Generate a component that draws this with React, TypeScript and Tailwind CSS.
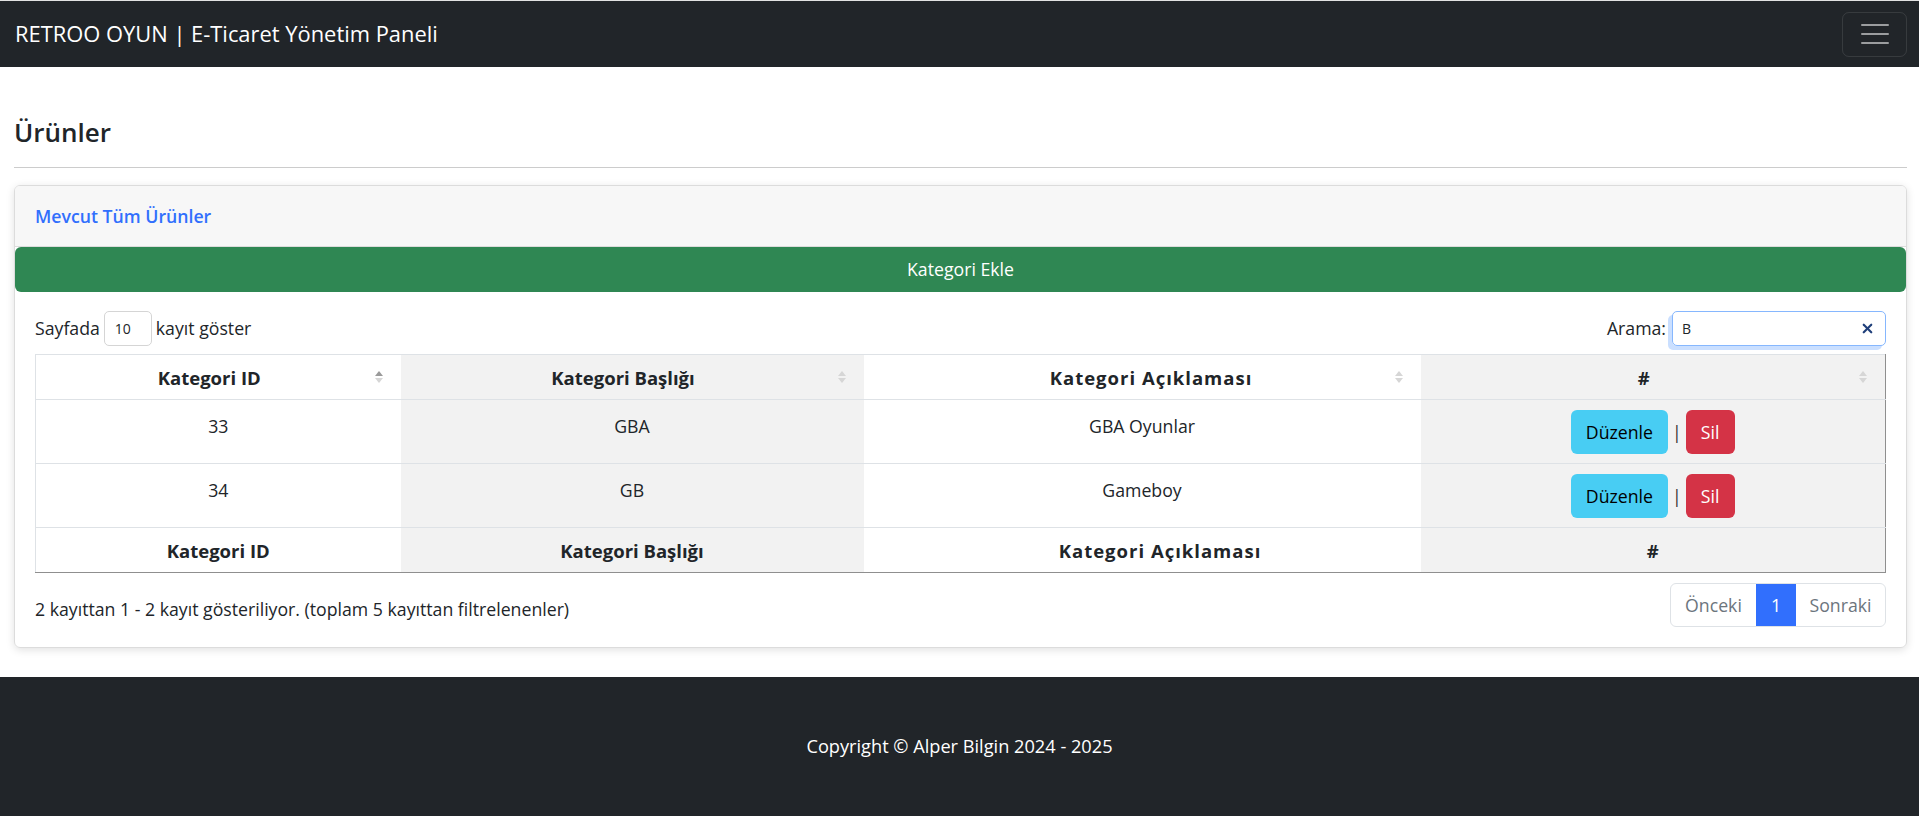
import { X } from "lucide-react";

const rows = [
  { id: 33, title: "GBA", desc: "GBA Oyunlar" },
  { id: 34, title: "GB", desc: "Gameboy" },
];

function SortIcon({ active }: { active?: boolean }) {
  return (
    <span className="absolute right-[18px] top-1/2 -translate-y-1/2 flex flex-col items-center gap-[2px]">
      <svg width="8" height="5" viewBox="0 0 8 5">
        <path d="M4 0L8 5H0Z" fill={active ? "#9a9a9a" : "#d6d6d6"} />
      </svg>
      <svg width="8" height="5" viewBox="0 0 8 5">
        <path d="M0 0H8L4 5Z" fill="#d6d6d6" />
      </svg>
    </span>
  );
}

export default function App() {
  return (
    <div className="min-h-screen bg-white text-[#212529] font-['Open_Sans',sans-serif] text-[17.7px] border-t border-[#e2e2e2]">
      {/* Navbar */}
      <nav className="h-[66px] bg-[#212529] flex items-center justify-between pl-[15px] pr-[12px]">
        <span className="text-white text-[21.9px]">RETROO OYUN | E-Ticaret Yönetim Paneli</span>
        <button className="w-[65px] h-[45px] border border-white/10 rounded-[7px] flex flex-col items-center justify-center gap-[7px]">
          <span className="block w-[28px] h-[2px] bg-white/55 rounded" />
          <span className="block w-[28px] h-[2px] bg-white/55 rounded" />
          <span className="block w-[28px] h-[2px] bg-white/55 rounded" />
        </button>
      </nav>

      {/* Main */}
      <main className="pl-[14px] pr-[12px]">
        <h4 className="text-[26px] font-semibold leading-[32px] pt-[49px] pb-[19px] border-b border-[#cccccc]">Ürünler</h4>

        <div className="mt-[17px] border border-[#dcdcdc] rounded-[6px] shadow-[0_2px_8px_rgba(0,0,0,0.12)] overflow-hidden">
          <div className="h-[61px] bg-[#f7f7f7] border-b border-[#dcdcdc] flex items-center px-[20px]">
            <span className="text-[#316ffd] font-semibold">Mevcut Tüm Ürünler</span>
          </div>
          <button className="w-full h-[45px] bg-[#2f8753] text-white rounded-[6px] flex items-center justify-center">
            Kategori Ekle
          </button>

          <div className="px-[20px] pt-[19px] pb-[20px]">
            <div className="flex items-center justify-between h-[35px]">
              <div className="flex items-center gap-[4px]">
                <span>Sayfada</span>
                <span className="w-[48px] h-[35px] border border-[#d5d5d5] rounded-[5px] flex items-center pl-[10px] text-[14px]">10</span>
                <span>kayıt göster</span>
              </div>
              <div className="flex items-center gap-[6px]">
                <span>Arama:</span>
                <div className="w-[214px] h-[35px] border border-[#86b7fe] rounded-[5px] shadow-[-4px_4px_0_0_rgba(13,110,253,0.22)] flex items-center justify-between pl-[9px] pr-[10px] text-[14px]">
                  <span>B</span>
                  <X size={15} strokeWidth={3.5} className="text-[#1f3f7a]" />
                </div>
              </div>
            </div>

            <table className="mt-[8px] w-full border-collapse table-fixed border-t border-l border-[#dee2e6] border-r-[#8f8f8f] border-b-[#8f8f8f] border-r border-b">
              <colgroup>
                <col className="w-[365px]" />
                <col className="w-[463px]" />
                <col className="w-[557px]" />
                <col />
              </colgroup>
              <thead>
                <tr className="h-[45px] border-b border-[#dee2e6] font-bold text-[18.5px]">
                  <th className="relative pt-[2px] pl-[10px] pr-[28px]">Kategori ID<SortIcon active /></th>
                  <th className="relative pt-[2px] pl-[10px] pr-[28px] bg-[#f2f2f2]">Kategori Başlığı<SortIcon /></th>
                  <th className="relative pt-[2px] pl-[46px] pr-[28px] tracking-[1px]">Kategori Açıklaması<SortIcon /></th>
                  <th className="relative pt-[2px] pl-[10px] pr-[28px] bg-[#f2f2f2]">#<SortIcon /></th>
                </tr>
              </thead>
              <tbody>
                {rows.map((r) => (
                  <tr key={r.id} className="h-[64px] border-b border-[#dee2e6] align-top">
                    <td className="text-center pt-[13px]">{r.id}</td>
                    <td className="text-center pt-[13px] bg-[#f2f2f2]">{r.title}</td>
                    <td className="text-center pt-[13px]">{r.desc}</td>
                    <td className="bg-[#f2f2f2] pt-[10px]">
                      <div className="flex items-center justify-center gap-[4px]">
                        <span className="w-[97px] h-[44px] bg-[#48cdf3] rounded-[6px] flex items-center justify-center text-black">Düzenle</span>
                        <span className="text-[#333]">|</span>
                        <span className="w-[49px] h-[44px] bg-[#d43346] rounded-[6px] flex items-center justify-center text-white">Sil</span>
                      </div>
                    </td>
                  </tr>
                ))}
              </tbody>
              <tfoot>
                <tr className="h-[45px] font-bold text-[18.5px]">
                  <th className="pt-[2px]">Kategori ID</th>
                  <th className="pt-[2px] bg-[#f2f2f2]">Kategori Başlığı</th>
                  <th className="pt-[2px] pl-[36px] tracking-[1px]">Kategori Açıklaması</th>
                  <th className="pt-[2px] bg-[#f2f2f2]">#</th>
                </tr>
              </tfoot>
            </table>

            <div className="mt-[10px] flex items-start justify-between">
              <span className="pt-[13px]">2 kayıttan 1 - 2 kayıt gösteriliyor. (toplam 5 kayıttan filtrelenenler)</span>
              <div className="flex h-[44px] border border-[#dee2e6] rounded-[6px] overflow-hidden text-[#6c757d]">
                <span className="w-[85px] flex items-center justify-center">Önceki</span>
                <span className="w-[40px] flex items-center justify-center bg-[#316ffd] text-white">1</span>
                <span className="w-[89px] flex items-center justify-center">Sonraki</span>
              </div>
            </div>
          </div>
        </div>
      </main>

      {/* Footer */}
      <footer className="mt-[29px] h-[140px] bg-[#212529] flex items-center justify-center">
        <span className="text-white text-[18.2px]">Copyright © Alper Bilgin 2024 - 2025</span>
      </footer>
    </div>
  );
}
